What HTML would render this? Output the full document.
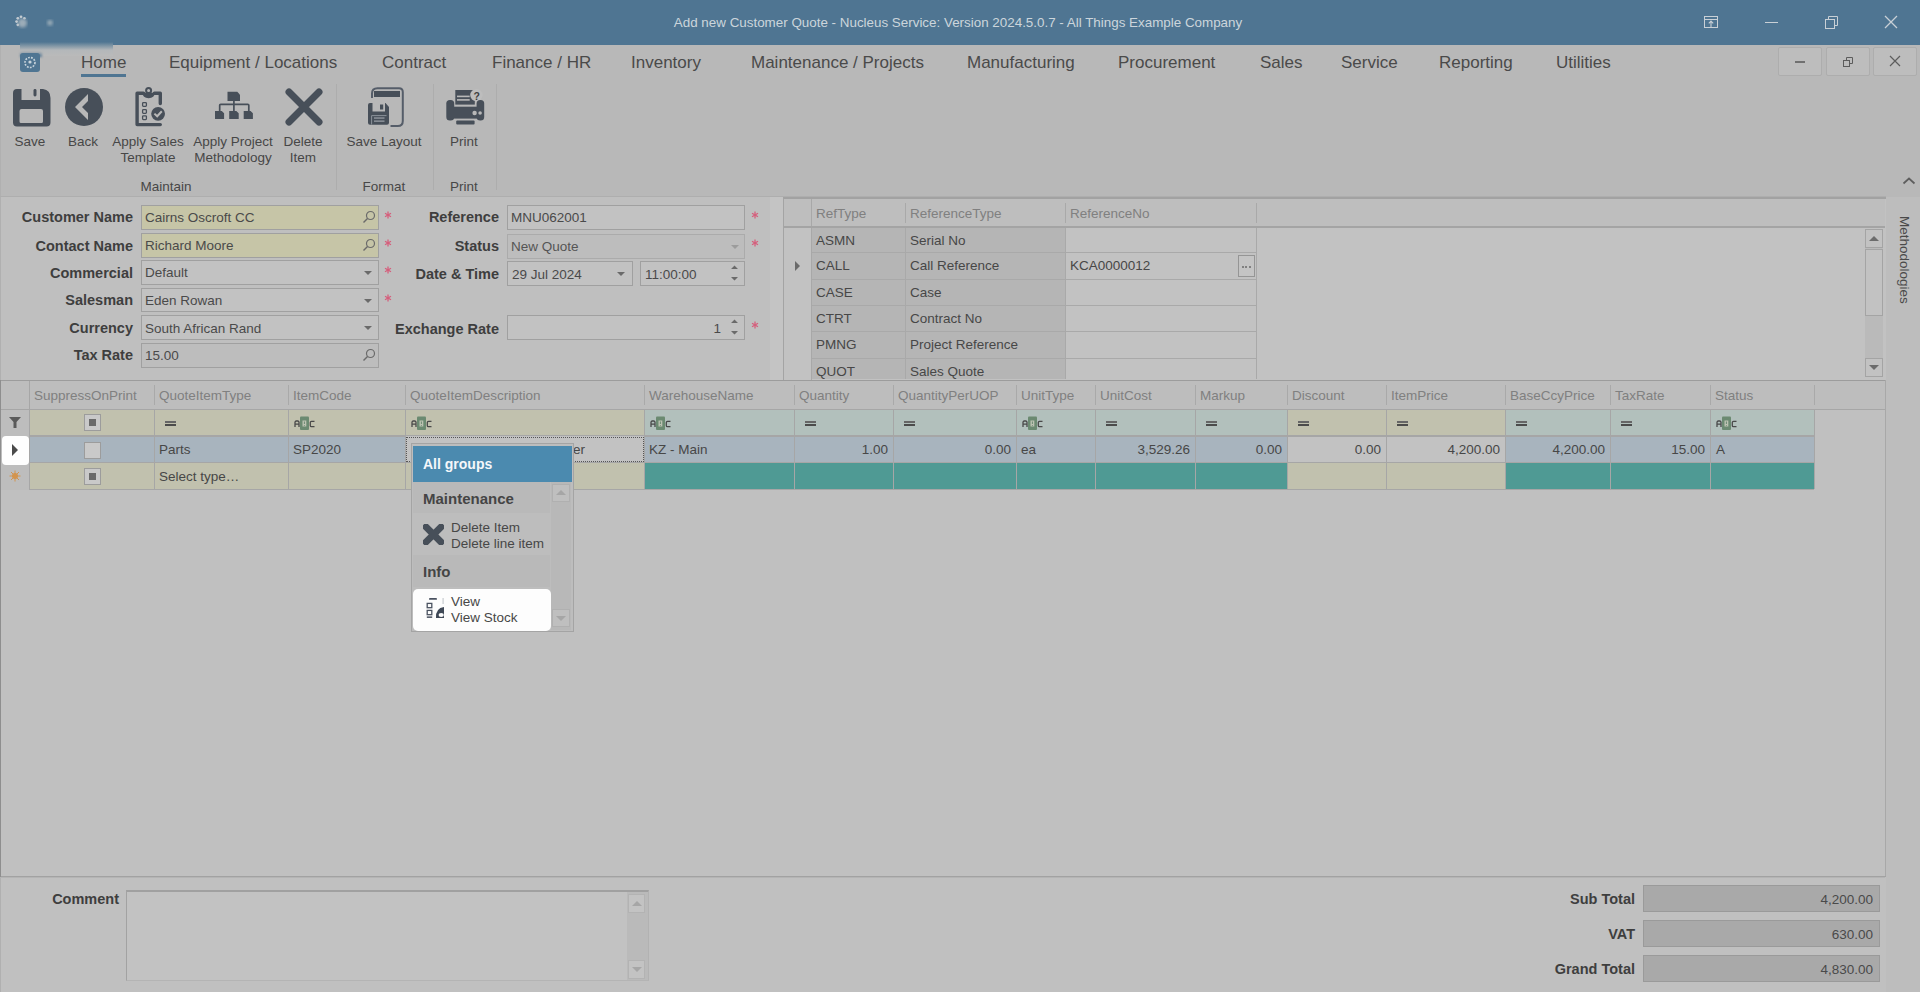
<!DOCTYPE html><html><head><meta charset="utf-8"><style>
html,body{margin:0;padding:0;width:1920px;height:992px;overflow:hidden;background:#b8b8b8;}
.t{position:absolute;white-space:nowrap;font-family:"Liberation Sans", sans-serif;}
.r{position:absolute;box-sizing:border-box;}
</style></head><body>
<div class="r" style="left:0px;top:0px;width:1920px;height:45px;background:#4f7592;"></div>
<div class="t" style="left:558px;width:800px;text-align:center;top:16px;font-size:13.4px;line-height:13.4px;font-weight:400;color:#ccd5dc;margin-top:0px;">Add new Customer Quote - Nucleus Service: Version 2024.5.0.7 - All Things Example Company</div>
<svg class="r" style="left:13px;top:12px;" width="50" height="24" viewBox="0 0 50 24"><defs><filter id="b1"><feGaussianBlur stdDeviation="1.6"/></filter><filter id="b2"><feGaussianBlur stdDeviation="0.5"/></filter></defs><g fill="#c3cbd1" filter="url(#b2)"><circle cx="8" cy="4.8" r="1.4"/><circle cx="4.8" cy="6.3" r="1.4"/><circle cx="11.4" cy="6.3" r="1.3"/><circle cx="3.6" cy="9.6" r="1.4"/><circle cx="4.8" cy="12.8" r="1.4"/></g><circle cx="9.5" cy="11" r="4.5" fill="#a9b6bf" filter="url(#b1)" opacity="0.85"/><circle cx="37" cy="10.7" r="2.8" fill="#9fb0bb" filter="url(#b1)" opacity="0.9"/></svg>
<svg class="r" style="left:1701px;top:12px;" width="20" height="20" viewBox="0 0 20 20"><rect x="3.5" y="4.5" width="13" height="11" fill="none" stroke="#c9d0d6" stroke-width="1"/><line x1="3.5" y1="7.5" x2="16.5" y2="7.5" stroke="#c9d0d6"/><path d="M10 15.5 V9 M7.8 11.3 L10 9 L12.2 11.3" fill="none" stroke="#c9d0d6" stroke-width="1.1"/></svg>
<div class="r" style="left:1765px;top:22px;width:13px;height:1.3px;background:#c9d0d6;"></div>
<svg class="r" style="left:1821px;top:12px;" width="20" height="20" viewBox="0 0 20 20"><rect x="4.5" y="7.5" width="9" height="9" fill="none" stroke="#c9d0d6"/><path d="M7.5 7.5 V4.5 H16.5 V13.5 H13.5" fill="none" stroke="#c9d0d6"/></svg>
<svg class="r" style="left:1881px;top:12px;" width="20" height="20" viewBox="0 0 20 20"><path d="M4 4 L16 16 M16 4 L4 16" stroke="#c9d0d6" stroke-width="1.3"/></svg>
<div class="r" style="left:0px;top:45px;width:1px;height:947px;background:#b0b0b0;"></div>
<div class="r" style="left:20px;top:42px;width:93px;height:14px;background:linear-gradient(#4f7592 0px, #8297a6 4px, #b3b7ba 8px, #bababa 14px);"></div>
<div class="r" style="left:20px;top:51px;width:22px;height:6px;background:linear-gradient(#bababa, #4f7592);border-radius:4px 4px 0 0;filter:blur(1px);"></div>
<div class="r" style="left:20px;top:53px;width:20px;height:19px;background:#4f7592;border-radius:3px;"></div>
<svg class="r" style="left:20px;top:53px;" width="20" height="19" viewBox="0 0 20 19"><circle cx="10" cy="9.5" r="5" fill="none" stroke="#c8d4dc" stroke-width="1.6" stroke-dasharray="1.8 1.2"/><circle cx="10" cy="9" r="1.6" fill="#c8d4dc"/></svg>
<div class="t" style="left:81px;top:54px;font-size:17px;line-height:17px;font-weight:400;color:#4a4a4a;">Home</div>
<div class="t" style="left:169px;top:54px;font-size:17px;line-height:17px;font-weight:400;color:#4a4a4a;">Equipment / Locations</div>
<div class="t" style="left:382px;top:54px;font-size:17px;line-height:17px;font-weight:400;color:#4a4a4a;">Contract</div>
<div class="t" style="left:492px;top:54px;font-size:17px;line-height:17px;font-weight:400;color:#4a4a4a;">Finance / HR</div>
<div class="t" style="left:631px;top:54px;font-size:17px;line-height:17px;font-weight:400;color:#4a4a4a;">Inventory</div>
<div class="t" style="left:751px;top:54px;font-size:17px;line-height:17px;font-weight:400;color:#4a4a4a;">Maintenance / Projects</div>
<div class="t" style="left:967px;top:54px;font-size:17px;line-height:17px;font-weight:400;color:#4a4a4a;">Manufacturing</div>
<div class="t" style="left:1118px;top:54px;font-size:17px;line-height:17px;font-weight:400;color:#4a4a4a;">Procurement</div>
<div class="t" style="left:1260px;top:54px;font-size:17px;line-height:17px;font-weight:400;color:#4a4a4a;">Sales</div>
<div class="t" style="left:1341px;top:54px;font-size:17px;line-height:17px;font-weight:400;color:#4a4a4a;">Service</div>
<div class="t" style="left:1439px;top:54px;font-size:17px;line-height:17px;font-weight:400;color:#4a4a4a;">Reporting</div>
<div class="t" style="left:1556px;top:54px;font-size:17px;line-height:17px;font-weight:400;color:#4a4a4a;">Utilities</div>
<div class="r" style="left:81px;top:74px;width:45px;height:3px;background:#4f7592;"></div>
<div class="r" style="left:1778px;top:47px;width:44px;height:29px;background:#bdbdbd;border:1px solid #adadad;border-radius:2px;"></div>
<div class="r" style="left:1826px;top:47px;width:44px;height:29px;background:#bdbdbd;border:1px solid #adadad;border-radius:2px;"></div>
<div class="r" style="left:1873px;top:47px;width:44px;height:29px;background:#bdbdbd;border:1px solid #adadad;border-radius:2px;"></div>
<div class="r" style="left:1795px;top:61px;width:10px;height:2px;background:#707070;"></div>
<svg class="r" style="left:1841px;top:55px;" width="14" height="14" viewBox="0 0 14 14"><rect x="2.5" y="5.5" width="6" height="6" fill="none" stroke="#5c5c5c"/><path d="M5.5 5.5 V2.5 H11.5 V8.5 H8.5" fill="none" stroke="#5c5c5c"/></svg>
<svg class="r" style="left:1888px;top:54px;" width="14" height="14" viewBox="0 0 14 14"><path d="M2 2 L12 12 M12 2 L2 12" stroke="#5c5c5c" stroke-width="1.2"/></svg>
<div class="r" style="left:0px;top:196px;width:1886px;height:1px;background:#aeaeae;"></div>
<div class="r" style="left:336px;top:84px;width:1px;height:106px;background:#adadad;"></div>
<div class="r" style="left:433px;top:84px;width:1px;height:106px;background:#adadad;"></div>
<div class="r" style="left:496px;top:84px;width:1px;height:106px;background:#adadad;"></div>
<svg class="r" style="left:13px;top:88px;" width="38" height="39" viewBox="0 0 38 39"><path d="M0 5 Q0 1 4 1 H8.5 V12 H27 V1 H30 Q37.5 2 37.5 10 V34.5 Q37.5 38.5 33.5 38.5 H4 Q0 38.5 0 34.5 Z M6.5 23 Q6.5 21 8.5 21 H28 Q30 21 30 23 V33.5 Q30 35 28.5 35 H8 Q6.5 35 6.5 33.5 Z" fill="#474f59" fill-rule="evenodd"/><rect x="20.5" y="1" width="3" height="7.5" rx="1.4" fill="#474f59"/></svg>
<svg class="r" style="left:65px;top:88px;" width="38" height="38" viewBox="0 0 38 38"><circle cx="19" cy="19" r="19" fill="#474f59"/><path d="M23 6 L10 19 L23 32 V25 L17 19 L23 13 Z" fill="#b8b8b8"/></svg>
<svg class="r" style="left:130px;top:84px;" width="36" height="46" viewBox="0 0 36 46"><path d="M13.5 9.3 H7.1 V40.6 H30.3 M24.4 9.3 H30.3 V19.6" fill="none" stroke="#474f59" stroke-width="3.4" stroke-linejoin="round" stroke-linecap="round"/><circle cx="18.6" cy="6.6" r="2.5" fill="none" stroke="#474f59" stroke-width="2"/><path d="M12.3 8.8 H24.9 Q24.5 14.2 18.6 14.2 Q12.7 14.2 12.3 8.8 Z" fill="#474f59"/><g fill="none" stroke="#474f59" stroke-width="1.3"><rect x="12.6" y="18.6" width="3.8" height="3.8" rx="0.8"/><rect x="12.6" y="25.6" width="3.8" height="3.8" rx="0.8"/><rect x="12.6" y="31.8" width="3.8" height="3.8" rx="0.8"/></g><circle cx="28.1" cy="29.8" r="6.9" fill="#474f59"/><path d="M24.4 29.6 L27.2 32.3 L31.8 27.3" fill="none" stroke="#b8b8b8" stroke-width="2"/></svg>
<svg class="r" style="left:210px;top:84px;" width="46" height="40" viewBox="0 0 46 40"><path d="M17.5 7.8 H27.3 L30 10.8 V16.9 H17.5 Z" fill="#474f59"/><path d="M23.9 16.9 V27 M9.7 27 V21.3 Q9.7 20.3 10.7 20.3 H37.8 Q38.8 20.3 38.8 21.3 V27" fill="none" stroke="#474f59" stroke-width="1.7"/><path d="M5 27 H11.8 L14.1 29.3 V34.9 H5 Z M19.2 27 H26.3 L28.7 29.3 V34.9 H19.2 Z M33.7 27 H40.6 L42.9 29.3 V34.9 H33.7 Z" fill="#474f59"/></svg>
<svg class="r" style="left:285px;top:88px;" width="38" height="38" viewBox="0 0 38 38"><path d="M4 4 L34 34 M34 4 L4 34" stroke="#474f59" stroke-width="7" stroke-linecap="round"/></svg>
<svg class="r" style="left:360px;top:84px;" width="50" height="46" viewBox="0 0 50 46"><path d="M12 14 V9.5 Q12 4.3 17.5 4.3 H39 Q42.8 4.3 42.8 8 V37 Q42.8 42 37.8 42 H30.5" fill="none" stroke="#555d69" stroke-width="2"/><rect x="14" y="7" width="26" height="6" fill="#474f59"/><path d="M8 21 Q8 19 10 19 H12.5 V27.5 H25 V19 H25.5 L29 23 V38.7 Q29 40.7 27 40.7 H10 Q8 40.7 8 38.7 Z" fill="#474f59"/><rect x="20" y="20.5" width="3.2" height="5" fill="#474f59"/><rect x="14" y="33.3" width="10.5" height="1.5" fill="#8c929a"/><rect x="14" y="36.4" width="10.5" height="1.5" fill="#8c929a"/><path d="M11.6 40.5 V31.6 H26.5" fill="none" stroke="#8c929a" stroke-width="1"/></svg>
<svg class="r" style="left:440px;top:84px;" width="50" height="46" viewBox="0 0 50 46"><rect x="15.3" y="6" width="19.5" height="14.6" fill="#474f59"/><rect x="17" y="11.6" width="12.7" height="1.6" fill="#b8b8b8"/><rect x="17" y="15.1" width="12.7" height="1.6" fill="#b8b8b8"/><circle cx="36.4" cy="11.1" r="6.2" fill="#bdbdbd"/><text x="33.6" y="15.8" font-family="Liberation Sans" font-size="10.5" font-weight="700" fill="#3f3f3f">?</text><rect x="6.3" y="16" width="7.9" height="20.6" rx="3.6" fill="#474f59"/><rect x="36.6" y="16" width="7.6" height="20.6" rx="3.6" fill="#474f59"/><rect x="10" y="22.7" width="30" height="11.9" fill="#474f59"/><circle cx="34.6" cy="29" r="2.2" fill="#b8b8b8"/><circle cx="40.1" cy="29" r="1.8" fill="#b8b8b8"/><rect x="16.2" y="36.6" width="18.4" height="4" rx="1" fill="#474f59"/></svg>
<div class="t" style="left:-370px;width:800px;text-align:center;top:135px;font-size:13.5px;line-height:13.5px;font-weight:400;color:#474747;">Save</div>
<div class="t" style="left:-317px;width:800px;text-align:center;top:135px;font-size:13.5px;line-height:13.5px;font-weight:400;color:#474747;">Back</div>
<div class="t" style="left:-252px;width:800px;text-align:center;top:135px;font-size:13.5px;line-height:13.5px;font-weight:400;color:#474747;">Apply Sales</div>
<div class="t" style="left:-252px;width:800px;text-align:center;top:151px;font-size:13.5px;line-height:13.5px;font-weight:400;color:#474747;">Template</div>
<div class="t" style="left:-167px;width:800px;text-align:center;top:135px;font-size:13.5px;line-height:13.5px;font-weight:400;color:#474747;">Apply Project</div>
<div class="t" style="left:-167px;width:800px;text-align:center;top:151px;font-size:13.5px;line-height:13.5px;font-weight:400;color:#474747;">Methodology</div>
<div class="t" style="left:-97px;width:800px;text-align:center;top:135px;font-size:13.5px;line-height:13.5px;font-weight:400;color:#474747;">Delete</div>
<div class="t" style="left:-97px;width:800px;text-align:center;top:151px;font-size:13.5px;line-height:13.5px;font-weight:400;color:#474747;">Item</div>
<div class="t" style="left:-16px;width:800px;text-align:center;top:135px;font-size:13.5px;line-height:13.5px;font-weight:400;color:#474747;">Save Layout</div>
<div class="t" style="left:64px;width:800px;text-align:center;top:135px;font-size:13.5px;line-height:13.5px;font-weight:400;color:#474747;">Print</div>
<div class="t" style="left:-234px;width:800px;text-align:center;top:180px;font-size:13.5px;line-height:13.5px;font-weight:400;color:#474747;">Maintain</div>
<div class="t" style="left:-16px;width:800px;text-align:center;top:180px;font-size:13.5px;line-height:13.5px;font-weight:400;color:#474747;">Format</div>
<div class="t" style="left:64px;width:800px;text-align:center;top:180px;font-size:13.5px;line-height:13.5px;font-weight:400;color:#474747;">Print</div>
<svg class="r" style="left:1902px;top:176px;" width="14" height="10" viewBox="0 0 14 10"><path d="M1.5 7.5 L7 2.5 L12.5 7.5" fill="none" stroke="#5e5e5e" stroke-width="1.7"/></svg>
<div class="r" style="left:1px;top:197px;width:1885px;height:183px;background:#bfbfbf;"></div>
<div class="r" style="left:1885px;top:197px;width:1px;height:183px;background:#a8a8a8;"></div>
<div class="r" style="left:1886px;top:197px;width:34px;height:795px;background:#bdbdbd;"></div>
<div class="t" style="left:1893px;top:216px;width:20px;height:90px;"><div style="position:absolute;left:0;top:0;transform-origin:0 0;transform:translate(19px,0) rotate(90deg);font-size:13.5px;line-height:15px;color:#4a4a4a;">Methodologies</div></div>
<div class="t" style="right:1787px;top:210px;font-size:14.5px;line-height:14.5px;font-weight:700;color:#3e3e3e;">Customer Name</div>
<div class="r" style="left:141px;top:205px;width:238px;height:25px;background:#c6c5a7;border:1px solid #a0a0a0;"></div>
<div class="t" style="left:145px;top:211px;font-size:13.5px;line-height:13.5px;font-weight:400;color:#4a4a4a;">Cairns Oscroft CC</div>
<svg class="r" style="left:362px;top:210px;" width="14" height="14" viewBox="0 0 14 14"><circle cx="8.5" cy="5.5" r="4" fill="none" stroke="#6a6a6a" stroke-width="1.2"/><line x1="5.5" y1="8.5" x2="1.5" y2="12.5" stroke="#6a6a6a" stroke-width="1.4"/></svg>
<svg class="r" style="left:384px;top:210.5px;" width="8" height="8" viewBox="0 0 8 8"><g stroke="#d65e7c" stroke-width="1.3"><line x1="4" y1="0.5" x2="4" y2="7.5"/><line x1="1" y1="2.3" x2="7" y2="5.7"/><line x1="1" y1="5.7" x2="7" y2="2.3"/></g></svg>
<div class="t" style="right:1787px;top:239px;font-size:14.5px;line-height:14.5px;font-weight:700;color:#3e3e3e;">Contact Name</div>
<div class="r" style="left:141px;top:233px;width:238px;height:25px;background:#c6c5a7;border:1px solid #a0a0a0;"></div>
<div class="t" style="left:145px;top:239px;font-size:13.5px;line-height:13.5px;font-weight:400;color:#4a4a4a;">Richard Moore</div>
<svg class="r" style="left:362px;top:238px;" width="14" height="14" viewBox="0 0 14 14"><circle cx="8.5" cy="5.5" r="4" fill="none" stroke="#6a6a6a" stroke-width="1.2"/><line x1="5.5" y1="8.5" x2="1.5" y2="12.5" stroke="#6a6a6a" stroke-width="1.4"/></svg>
<svg class="r" style="left:384px;top:238.5px;" width="8" height="8" viewBox="0 0 8 8"><g stroke="#d65e7c" stroke-width="1.3"><line x1="4" y1="0.5" x2="4" y2="7.5"/><line x1="1" y1="2.3" x2="7" y2="5.7"/><line x1="1" y1="5.7" x2="7" y2="2.3"/></g></svg>
<div class="t" style="right:1787px;top:266px;font-size:14.5px;line-height:14.5px;font-weight:700;color:#3e3e3e;">Commercial</div>
<div class="r" style="left:141px;top:260px;width:238px;height:25px;background:#c2c2c2;border:1px solid #a0a0a0;"></div>
<div class="t" style="left:145px;top:266px;font-size:13.5px;line-height:13.5px;font-weight:400;color:#4a4a4a;">Default</div>
<svg class="r" style="left:364px;top:271px;" width="9" height="5" viewBox="0 0 9 5"><path d="M0 0 H8 L4 4 Z" fill="#6a6a6a"/></svg>
<svg class="r" style="left:384px;top:265.5px;" width="8" height="8" viewBox="0 0 8 8"><g stroke="#d65e7c" stroke-width="1.3"><line x1="4" y1="0.5" x2="4" y2="7.5"/><line x1="1" y1="2.3" x2="7" y2="5.7"/><line x1="1" y1="5.7" x2="7" y2="2.3"/></g></svg>
<div class="t" style="right:1787px;top:293px;font-size:14.5px;line-height:14.5px;font-weight:700;color:#3e3e3e;">Salesman</div>
<div class="r" style="left:141px;top:288px;width:238px;height:24px;background:#c2c2c2;border:1px solid #a0a0a0;"></div>
<div class="t" style="left:145px;top:294px;font-size:13.5px;line-height:13.5px;font-weight:400;color:#4a4a4a;">Eden Rowan</div>
<svg class="r" style="left:364px;top:299px;" width="9" height="5" viewBox="0 0 9 5"><path d="M0 0 H8 L4 4 Z" fill="#6a6a6a"/></svg>
<svg class="r" style="left:384px;top:293.5px;" width="8" height="8" viewBox="0 0 8 8"><g stroke="#d65e7c" stroke-width="1.3"><line x1="4" y1="0.5" x2="4" y2="7.5"/><line x1="1" y1="2.3" x2="7" y2="5.7"/><line x1="1" y1="5.7" x2="7" y2="2.3"/></g></svg>
<div class="t" style="right:1787px;top:321px;font-size:14.5px;line-height:14.5px;font-weight:700;color:#3e3e3e;">Currency</div>
<div class="r" style="left:141px;top:315px;width:238px;height:25px;background:#c2c2c2;border:1px solid #a0a0a0;"></div>
<div class="t" style="left:145px;top:322px;font-size:13.5px;line-height:13.5px;font-weight:400;color:#4a4a4a;">South African Rand</div>
<svg class="r" style="left:364px;top:326px;" width="9" height="5" viewBox="0 0 9 5"><path d="M0 0 H8 L4 4 Z" fill="#6a6a6a"/></svg>
<div class="t" style="right:1787px;top:348px;font-size:14.5px;line-height:14.5px;font-weight:700;color:#3e3e3e;">Tax Rate</div>
<div class="r" style="left:141px;top:343px;width:238px;height:25px;background:#bdbdbd;border:1px solid #a0a0a0;"></div>
<div class="t" style="left:145px;top:349px;font-size:13.5px;line-height:13.5px;font-weight:400;color:#4a4a4a;">15.00</div>
<svg class="r" style="left:362px;top:348px;" width="14" height="14" viewBox="0 0 14 14"><circle cx="8.5" cy="5.5" r="4" fill="none" stroke="#6a6a6a" stroke-width="1.2"/><line x1="5.5" y1="8.5" x2="1.5" y2="12.5" stroke="#6a6a6a" stroke-width="1.4"/></svg>
<div class="t" style="right:1421px;top:210px;font-size:14.5px;line-height:14.5px;font-weight:700;color:#3e3e3e;">Reference</div>
<div class="r" style="left:507px;top:205px;width:238px;height:25px;background:#c2c2c2;border:1px solid #a0a0a0;"></div>
<div class="t" style="left:511px;top:211px;font-size:13.5px;line-height:13.5px;font-weight:400;color:#4a4a4a;">MNU062001</div>
<svg class="r" style="left:750.5px;top:210.5px;" width="8" height="8" viewBox="0 0 8 8"><g stroke="#d65e7c" stroke-width="1.3"><line x1="4" y1="0.5" x2="4" y2="7.5"/><line x1="1" y1="2.3" x2="7" y2="5.7"/><line x1="1" y1="5.7" x2="7" y2="2.3"/></g></svg>
<div class="t" style="right:1421px;top:239px;font-size:14.5px;line-height:14.5px;font-weight:700;color:#3e3e3e;">Status</div>
<div class="r" style="left:507px;top:234px;width:238px;height:25px;background:#bdbdbd;border:1px solid #ababab;"></div>
<div class="t" style="left:511px;top:240px;font-size:13.5px;line-height:13.5px;font-weight:400;color:#555;">New Quote</div>
<svg class="r" style="left:731px;top:245px;" width="9" height="5" viewBox="0 0 9 5"><path d="M0 0 H8 L4 4 Z" fill="#9c9c9c"/></svg>
<svg class="r" style="left:750.5px;top:238.5px;" width="8" height="8" viewBox="0 0 8 8"><g stroke="#d65e7c" stroke-width="1.3"><line x1="4" y1="0.5" x2="4" y2="7.5"/><line x1="1" y1="2.3" x2="7" y2="5.7"/><line x1="1" y1="5.7" x2="7" y2="2.3"/></g></svg>
<div class="t" style="right:1421px;top:267px;font-size:14.5px;line-height:14.5px;font-weight:700;color:#3e3e3e;">Date &amp; Time</div>
<div class="r" style="left:507px;top:261px;width:126px;height:25px;background:#c2c2c2;border:1px solid #a0a0a0;"></div>
<div class="t" style="left:512px;top:268px;font-size:13.5px;line-height:13.5px;font-weight:400;color:#4a4a4a;">29 Jul 2024</div>
<svg class="r" style="left:617px;top:272px;" width="9" height="5" viewBox="0 0 9 5"><path d="M0 0 H8 L4 4 Z" fill="#6a6a6a"/></svg>
<div class="r" style="left:640px;top:261px;width:105px;height:25px;background:#c2c2c2;border:1px solid #a0a0a0;"></div>
<div class="t" style="left:645px;top:268px;font-size:13.5px;line-height:13.5px;font-weight:400;color:#4a4a4a;">11:00:00</div>
<svg class="r" style="left:730px;top:264px;" width="9" height="18" viewBox="0 0 9 18"><path d="M1 5 L4.5 1.5 L8 5 Z M1 13 L4.5 16.5 L8 13 Z" fill="#6a6a6a"/></svg>
<div class="t" style="right:1421px;top:322px;font-size:14.5px;line-height:14.5px;font-weight:700;color:#3e3e3e;">Exchange Rate</div>
<div class="r" style="left:507px;top:315px;width:238px;height:25px;background:#c2c2c2;border:1px solid #a0a0a0;"></div>
<div class="t" style="right:1199px;top:322px;font-size:13.5px;line-height:13.5px;font-weight:400;color:#4a4a4a;">1</div>
<svg class="r" style="left:730px;top:318px;" width="9" height="18" viewBox="0 0 9 18"><path d="M1 5 L4.5 1.5 L8 5 Z M1 13 L4.5 16.5 L8 13 Z" fill="#6a6a6a"/></svg>
<svg class="r" style="left:750.5px;top:320.5px;" width="8" height="8" viewBox="0 0 8 8"><g stroke="#d65e7c" stroke-width="1.3"><line x1="4" y1="0.5" x2="4" y2="7.5"/><line x1="1" y1="2.3" x2="7" y2="5.7"/><line x1="1" y1="5.7" x2="7" y2="2.3"/></g></svg>
<div class="r" style="left:770px;top:197px;width:13px;height:183px;background:#c4c4c4;"></div>
<div class="r" style="left:783px;top:197px;width:1103px;height:183px;background:#c2c2c2;border-left:1px solid #a4a4a4;border-top:2px solid #a2a2a2;"></div>
<div class="r" style="left:784px;top:199px;width:1101px;height:27px;background:#bebebe;"></div>
<div class="r" style="left:811px;top:199px;width:1px;height:181px;background:#a8a8a8;"></div>
<div class="r" style="left:905px;top:203px;width:1px;height:20px;background:#a9a9a9;"></div>
<div class="r" style="left:1065px;top:203px;width:1px;height:20px;background:#a9a9a9;"></div>
<div class="r" style="left:1256px;top:203px;width:1px;height:20px;background:#a9a9a9;"></div>
<div class="t" style="left:816px;top:207px;font-size:13.5px;line-height:13.5px;font-weight:400;color:#808080;">RefType</div>
<div class="t" style="left:910px;top:207px;font-size:13.5px;line-height:13.5px;font-weight:400;color:#808080;">ReferenceType</div>
<div class="t" style="left:1070px;top:207px;font-size:13.5px;line-height:13.5px;font-weight:400;color:#808080;">ReferenceNo</div>
<div class="r" style="left:784px;top:226px;width:1101px;height:2px;background:#a4a4a4;"></div>
<div class="r" style="left:812px;top:228px;width:253px;height:25px;background:#b5b5b5;"></div>
<div class="r" style="left:1066px;top:228px;width:190px;height:25px;background:#c2c2c2;"></div>
<div class="r" style="left:812px;top:252px;width:444px;height:1px;background:#a9a9a9;"></div>
<div class="t" style="left:816px;top:234px;font-size:13.5px;line-height:13.5px;font-weight:400;color:#474747;">ASMN</div>
<div class="t" style="left:910px;top:234px;font-size:13.5px;line-height:13.5px;font-weight:400;color:#474747;">Serial No</div>
<div class="r" style="left:812px;top:253px;width:253px;height:27px;background:#b5b5b5;"></div>
<div class="r" style="left:1066px;top:253px;width:190px;height:27px;background:#c2c2c2;"></div>
<div class="r" style="left:812px;top:279px;width:444px;height:1px;background:#a9a9a9;"></div>
<div class="t" style="left:816px;top:259px;font-size:13.5px;line-height:13.5px;font-weight:400;color:#474747;">CALL</div>
<div class="t" style="left:910px;top:259px;font-size:13.5px;line-height:13.5px;font-weight:400;color:#474747;">Call Reference</div>
<div class="t" style="left:1070px;top:259px;font-size:13.5px;line-height:13.5px;font-weight:400;color:#474747;">KCA0000012</div>
<div class="r" style="left:812px;top:280px;width:253px;height:26px;background:#b5b5b5;"></div>
<div class="r" style="left:1066px;top:280px;width:190px;height:26px;background:#c2c2c2;"></div>
<div class="r" style="left:812px;top:305px;width:444px;height:1px;background:#a9a9a9;"></div>
<div class="t" style="left:816px;top:286px;font-size:13.5px;line-height:13.5px;font-weight:400;color:#474747;">CASE</div>
<div class="t" style="left:910px;top:286px;font-size:13.5px;line-height:13.5px;font-weight:400;color:#474747;">Case</div>
<div class="r" style="left:812px;top:306px;width:253px;height:26px;background:#b5b5b5;"></div>
<div class="r" style="left:1066px;top:306px;width:190px;height:26px;background:#c2c2c2;"></div>
<div class="r" style="left:812px;top:331px;width:444px;height:1px;background:#a9a9a9;"></div>
<div class="t" style="left:816px;top:312px;font-size:13.5px;line-height:13.5px;font-weight:400;color:#474747;">CTRT</div>
<div class="t" style="left:910px;top:312px;font-size:13.5px;line-height:13.5px;font-weight:400;color:#474747;">Contract No</div>
<div class="r" style="left:812px;top:332px;width:253px;height:27px;background:#b5b5b5;"></div>
<div class="r" style="left:1066px;top:332px;width:190px;height:27px;background:#c2c2c2;"></div>
<div class="r" style="left:812px;top:358px;width:444px;height:1px;background:#a9a9a9;"></div>
<div class="t" style="left:816px;top:338px;font-size:13.5px;line-height:13.5px;font-weight:400;color:#474747;">PMNG</div>
<div class="t" style="left:910px;top:338px;font-size:13.5px;line-height:13.5px;font-weight:400;color:#474747;">Project Reference</div>
<div class="r" style="left:812px;top:359px;width:253px;height:20px;background:#b5b5b5;"></div>
<div class="r" style="left:1066px;top:359px;width:190px;height:20px;background:#c2c2c2;"></div>
<div class="t" style="left:816px;top:365px;font-size:13.5px;line-height:13.5px;font-weight:400;color:#474747;">QUOT</div>
<div class="t" style="left:910px;top:365px;font-size:13.5px;line-height:13.5px;font-weight:400;color:#474747;">Sales Quote</div>
<div class="r" style="left:905px;top:228px;width:1px;height:151px;background:#a9a9a9;"></div>
<div class="r" style="left:1065px;top:228px;width:1px;height:151px;background:#a9a9a9;"></div>
<div class="r" style="left:1256px;top:228px;width:1px;height:151px;background:#a9a9a9;"></div>
<div class="r" style="left:1238px;top:255px;width:17px;height:22px;background:#c4c4c4;border:1px solid #959595;"></div>
<div class="r" style="left:1241.5px;top:265.5px;width:2.2px;height:2.2px;background:#6a6a6a;border-radius:1px;"></div>
<div class="r" style="left:1245.3px;top:265.5px;width:2.2px;height:2.2px;background:#6a6a6a;border-radius:1px;"></div>
<div class="r" style="left:1249px;top:265.5px;width:2.2px;height:2.2px;background:#6a6a6a;border-radius:1px;"></div>
<svg class="r" style="left:795px;top:261px;" width="6" height="10" viewBox="0 0 6 10"><path d="M0 0 L5 5 L0 10 Z" fill="#6a6a6a"/></svg>
<div class="r" style="left:1865px;top:229px;width:18px;height:148px;background:#bababa;"></div>
<div class="r" style="left:1865px;top:229px;width:18px;height:19px;background:#c2c2c2;border:1px solid #a4a4a4;"></div>
<div class="r" style="left:1865px;top:249px;width:18px;height:67px;background:#c2c2c2;border:1px solid #a4a4a4;"></div>
<div class="r" style="left:1865px;top:358px;width:18px;height:19px;background:#c2c2c2;border:1px solid #a4a4a4;"></div>
<svg class="r" style="left:1869px;top:234px;" width="10" height="8" viewBox="0 0 10 8"><path d="M0 7 L5 2 L10 7 Z" fill="#6c6c6c"/></svg>
<svg class="r" style="left:1869px;top:364px;" width="10" height="8" viewBox="0 0 10 8"><path d="M0 1 L5 6 L10 1 Z" fill="#6c6c6c"/></svg>
<div class="r" style="left:1px;top:380px;width:1885px;height:497px;background:#c0c0c0;"></div>
<div class="r" style="left:0px;top:380px;width:1886px;height:1px;background:#9c9c9c;"></div>
<div class="r" style="left:1885px;top:380px;width:1px;height:497px;background:#a8a8a8;"></div>
<div class="r" style="left:0px;top:876px;width:1886px;height:1px;background:#a2a2a2;"></div>
<div class="r" style="left:0px;top:877px;width:1886px;height:1px;background:#b4b4b4;"></div>
<div class="r" style="left:0px;top:380px;width:1px;height:497px;background:#8e8e8e;"></div>
<div class="r" style="left:1px;top:381px;width:1884px;height:28px;background:#bdbdbd;"></div>
<div class="r" style="left:1px;top:409px;width:1884px;height:1px;background:#a6a6a6;"></div>
<div class="r" style="left:29px;top:381px;width:1px;height:28px;background:#a6a6a6;"></div>
<div class="t" style="left:34px;top:389px;font-size:13.5px;line-height:13.5px;font-weight:400;color:#808080;">SuppressOnPrint</div>
<div class="r" style="left:154px;top:385px;width:1px;height:20px;background:#a9a9a9;"></div>
<div class="t" style="left:159px;top:389px;font-size:13.5px;line-height:13.5px;font-weight:400;color:#808080;">QuoteItemType</div>
<div class="r" style="left:288px;top:385px;width:1px;height:20px;background:#a9a9a9;"></div>
<div class="t" style="left:293px;top:389px;font-size:13.5px;line-height:13.5px;font-weight:400;color:#808080;">ItemCode</div>
<div class="r" style="left:405px;top:385px;width:1px;height:20px;background:#a9a9a9;"></div>
<div class="t" style="left:410px;top:389px;font-size:13.5px;line-height:13.5px;font-weight:400;color:#808080;">QuoteItemDescription</div>
<div class="r" style="left:644px;top:385px;width:1px;height:20px;background:#a9a9a9;"></div>
<div class="t" style="left:649px;top:389px;font-size:13.5px;line-height:13.5px;font-weight:400;color:#808080;">WarehouseName</div>
<div class="r" style="left:794px;top:385px;width:1px;height:20px;background:#a9a9a9;"></div>
<div class="t" style="left:799px;top:389px;font-size:13.5px;line-height:13.5px;font-weight:400;color:#808080;">Quantity</div>
<div class="r" style="left:893px;top:385px;width:1px;height:20px;background:#a9a9a9;"></div>
<div class="t" style="left:898px;top:389px;font-size:13.5px;line-height:13.5px;font-weight:400;color:#808080;">QuantityPerUOP</div>
<div class="r" style="left:1016px;top:385px;width:1px;height:20px;background:#a9a9a9;"></div>
<div class="t" style="left:1021px;top:389px;font-size:13.5px;line-height:13.5px;font-weight:400;color:#808080;">UnitType</div>
<div class="r" style="left:1095px;top:385px;width:1px;height:20px;background:#a9a9a9;"></div>
<div class="t" style="left:1100px;top:389px;font-size:13.5px;line-height:13.5px;font-weight:400;color:#808080;">UnitCost</div>
<div class="r" style="left:1195px;top:385px;width:1px;height:20px;background:#a9a9a9;"></div>
<div class="t" style="left:1200px;top:389px;font-size:13.5px;line-height:13.5px;font-weight:400;color:#808080;">Markup</div>
<div class="r" style="left:1287px;top:385px;width:1px;height:20px;background:#a9a9a9;"></div>
<div class="t" style="left:1292px;top:389px;font-size:13.5px;line-height:13.5px;font-weight:400;color:#808080;">Discount</div>
<div class="r" style="left:1386px;top:385px;width:1px;height:20px;background:#a9a9a9;"></div>
<div class="t" style="left:1391px;top:389px;font-size:13.5px;line-height:13.5px;font-weight:400;color:#808080;">ItemPrice</div>
<div class="r" style="left:1505px;top:385px;width:1px;height:20px;background:#a9a9a9;"></div>
<div class="t" style="left:1510px;top:389px;font-size:13.5px;line-height:13.5px;font-weight:400;color:#808080;">BaseCcyPrice</div>
<div class="r" style="left:1610px;top:385px;width:1px;height:20px;background:#a9a9a9;"></div>
<div class="t" style="left:1615px;top:389px;font-size:13.5px;line-height:13.5px;font-weight:400;color:#808080;">TaxRate</div>
<div class="r" style="left:1710px;top:385px;width:1px;height:20px;background:#a9a9a9;"></div>
<div class="t" style="left:1715px;top:389px;font-size:13.5px;line-height:13.5px;font-weight:400;color:#808080;">Status</div>
<div class="r" style="left:1814px;top:385px;width:1px;height:20px;background:#a9a9a9;"></div>
<div class="r" style="left:1px;top:410px;width:28px;height:80px;background:#bdbdbd;"></div>
<div class="r" style="left:29px;top:410px;width:1px;height:80px;background:#a6a6a6;"></div>
<div class="r" style="left:30px;top:410px;width:124px;height:25px;background:#c1c1ae;"></div>
<div class="r" style="left:30px;top:436px;width:124px;height:26px;background:#a8b4be;"></div>
<div class="r" style="left:30px;top:463px;width:124px;height:26px;background:#c1c1ae;"></div>
<div class="r" style="left:155px;top:410px;width:133px;height:25px;background:#c1c1ae;"></div>
<div class="r" style="left:155px;top:436px;width:133px;height:26px;background:#a8b4be;"></div>
<div class="r" style="left:155px;top:463px;width:133px;height:26px;background:#c1c1ae;"></div>
<div class="r" style="left:289px;top:410px;width:116px;height:25px;background:#c1c1ae;"></div>
<div class="r" style="left:289px;top:436px;width:116px;height:26px;background:#a8b4be;"></div>
<div class="r" style="left:289px;top:463px;width:116px;height:26px;background:#c1c1ae;"></div>
<div class="r" style="left:406px;top:410px;width:238px;height:25px;background:#c1c1ae;"></div>
<div class="r" style="left:406px;top:436px;width:238px;height:26px;background:#a8b4be;"></div>
<div class="r" style="left:406px;top:463px;width:238px;height:26px;background:#c1c1ae;"></div>
<div class="r" style="left:645px;top:410px;width:149px;height:25px;background:#b2c0bc;"></div>
<div class="r" style="left:645px;top:436px;width:149px;height:26px;background:#a8b4be;"></div>
<div class="r" style="left:645px;top:463px;width:149px;height:26px;background:#4f9a94;"></div>
<div class="r" style="left:795px;top:410px;width:98px;height:25px;background:#b2c0bc;"></div>
<div class="r" style="left:795px;top:436px;width:98px;height:26px;background:#a8b4be;"></div>
<div class="r" style="left:795px;top:463px;width:98px;height:26px;background:#4f9a94;"></div>
<div class="r" style="left:894px;top:410px;width:122px;height:25px;background:#b2c0bc;"></div>
<div class="r" style="left:894px;top:436px;width:122px;height:26px;background:#a8b4be;"></div>
<div class="r" style="left:894px;top:463px;width:122px;height:26px;background:#4f9a94;"></div>
<div class="r" style="left:1017px;top:410px;width:78px;height:25px;background:#b2c0bc;"></div>
<div class="r" style="left:1017px;top:436px;width:78px;height:26px;background:#a8b4be;"></div>
<div class="r" style="left:1017px;top:463px;width:78px;height:26px;background:#4f9a94;"></div>
<div class="r" style="left:1096px;top:410px;width:99px;height:25px;background:#b2c0bc;"></div>
<div class="r" style="left:1096px;top:436px;width:99px;height:26px;background:#a8b4be;"></div>
<div class="r" style="left:1096px;top:463px;width:99px;height:26px;background:#4f9a94;"></div>
<div class="r" style="left:1196px;top:410px;width:91px;height:25px;background:#b2c0bc;"></div>
<div class="r" style="left:1196px;top:436px;width:91px;height:26px;background:#a8b4be;"></div>
<div class="r" style="left:1196px;top:463px;width:91px;height:26px;background:#4f9a94;"></div>
<div class="r" style="left:1288px;top:410px;width:98px;height:25px;background:#c1c1ae;"></div>
<div class="r" style="left:1288px;top:436px;width:98px;height:26px;background:#c2c2c2;"></div>
<div class="r" style="left:1288px;top:463px;width:98px;height:26px;background:#c1c1ae;"></div>
<div class="r" style="left:1387px;top:410px;width:118px;height:25px;background:#c1c1ae;"></div>
<div class="r" style="left:1387px;top:436px;width:118px;height:26px;background:#c2c2c2;"></div>
<div class="r" style="left:1387px;top:463px;width:118px;height:26px;background:#c1c1ae;"></div>
<div class="r" style="left:1506px;top:410px;width:104px;height:25px;background:#b2c0bc;"></div>
<div class="r" style="left:1506px;top:436px;width:104px;height:26px;background:#a8b4be;"></div>
<div class="r" style="left:1506px;top:463px;width:104px;height:26px;background:#4f9a94;"></div>
<div class="r" style="left:1611px;top:410px;width:99px;height:25px;background:#b2c0bc;"></div>
<div class="r" style="left:1611px;top:436px;width:99px;height:26px;background:#a8b4be;"></div>
<div class="r" style="left:1611px;top:463px;width:99px;height:26px;background:#4f9a94;"></div>
<div class="r" style="left:1711px;top:410px;width:103px;height:25px;background:#b2c0bc;"></div>
<div class="r" style="left:1711px;top:436px;width:103px;height:26px;background:#a8b4be;"></div>
<div class="r" style="left:1711px;top:463px;width:103px;height:26px;background:#4f9a94;"></div>
<div class="r" style="left:154px;top:410px;width:1px;height:79px;background:#a6a6a6;"></div>
<div class="r" style="left:288px;top:410px;width:1px;height:79px;background:#a6a6a6;"></div>
<div class="r" style="left:405px;top:410px;width:1px;height:79px;background:#a6a6a6;"></div>
<div class="r" style="left:644px;top:410px;width:1px;height:79px;background:#a6a6a6;"></div>
<div class="r" style="left:794px;top:410px;width:1px;height:79px;background:#a6a6a6;"></div>
<div class="r" style="left:893px;top:410px;width:1px;height:79px;background:#a6a6a6;"></div>
<div class="r" style="left:1016px;top:410px;width:1px;height:79px;background:#a6a6a6;"></div>
<div class="r" style="left:1095px;top:410px;width:1px;height:79px;background:#a6a6a6;"></div>
<div class="r" style="left:1195px;top:410px;width:1px;height:79px;background:#a6a6a6;"></div>
<div class="r" style="left:1287px;top:410px;width:1px;height:79px;background:#a6a6a6;"></div>
<div class="r" style="left:1386px;top:410px;width:1px;height:79px;background:#a6a6a6;"></div>
<div class="r" style="left:1505px;top:410px;width:1px;height:79px;background:#a6a6a6;"></div>
<div class="r" style="left:1610px;top:410px;width:1px;height:79px;background:#a6a6a6;"></div>
<div class="r" style="left:1710px;top:410px;width:1px;height:79px;background:#a6a6a6;"></div>
<div class="r" style="left:1814px;top:410px;width:1px;height:79px;background:#a6a6a6;"></div>
<div class="r" style="left:29px;top:435px;width:1785px;height:2px;background:#a6a6a6;"></div>
<div class="r" style="left:29px;top:462px;width:1785px;height:1px;background:#a6a6a6;"></div>
<div class="r" style="left:29px;top:489px;width:1785px;height:1px;background:#a6a6a6;"></div>
<svg class="r" style="left:8px;top:416px;" width="14" height="13" viewBox="0 0 14 13"><path d="M1 1 H13 L8.5 6 V12 H5.5 V6 Z" fill="#5a5a5a"/></svg>
<div class="r" style="left:84px;top:414px;width:17px;height:17px;background:#c9c9c9;border:1px solid #9c9c9c;"></div>
<div class="r" style="left:89px;top:419px;width:7px;height:7px;background:#6a6a6a;"></div>
<div class="r" style="left:84px;top:442px;width:17px;height:17px;background:#c9c9c9;border:1px solid #9c9c9c;"></div>
<div class="r" style="left:84px;top:468px;width:17px;height:17px;background:#c9c9c9;border:1px solid #9c9c9c;"></div>
<div class="r" style="left:89px;top:473px;width:7px;height:7px;background:#6a6a6a;"></div>
<div class="r" style="left:165px;top:421px;width:11px;height:1.6px;background:#666666;"></div>
<div class="r" style="left:165px;top:424px;width:11px;height:1.6px;background:#4c4c4c;"></div>
<svg class="r" style="left:294px;top:416px;" width="22" height="15" viewBox="0 0 22 15"><path d="M1 11 V6 L2 5 H4 L5 6 V11 M1 8.2 H5" fill="none" stroke="#4a4a4a" stroke-width="1.3"/><rect x="6" y="0.5" width="9" height="13.5" rx="1" fill="#6b8a71"/><rect x="8.5" y="4.5" width="3.8" height="6" fill="#bcc2b2"/><path d="M10.4 5.5 V8 M10.4 9 V9.8" stroke="#6b8a71" stroke-width="1"/><path d="M20.5 5.3 H17.5 Q16.3 5.3 16.3 6.5 V9.5 Q16.3 10.7 17.5 10.7 H20.5" fill="none" stroke="#4a4a4a" stroke-width="1.3"/></svg>
<svg class="r" style="left:411px;top:416px;" width="22" height="15" viewBox="0 0 22 15"><path d="M1 11 V6 L2 5 H4 L5 6 V11 M1 8.2 H5" fill="none" stroke="#4a4a4a" stroke-width="1.3"/><rect x="6" y="0.5" width="9" height="13.5" rx="1" fill="#6b8a71"/><rect x="8.5" y="4.5" width="3.8" height="6" fill="#bcc2b2"/><path d="M10.4 5.5 V8 M10.4 9 V9.8" stroke="#6b8a71" stroke-width="1"/><path d="M20.5 5.3 H17.5 Q16.3 5.3 16.3 6.5 V9.5 Q16.3 10.7 17.5 10.7 H20.5" fill="none" stroke="#4a4a4a" stroke-width="1.3"/></svg>
<svg class="r" style="left:650px;top:416px;" width="22" height="15" viewBox="0 0 22 15"><path d="M1 11 V6 L2 5 H4 L5 6 V11 M1 8.2 H5" fill="none" stroke="#4a4a4a" stroke-width="1.3"/><rect x="6" y="0.5" width="9" height="13.5" rx="1" fill="#6b8a71"/><rect x="8.5" y="4.5" width="3.8" height="6" fill="#bcc2b2"/><path d="M10.4 5.5 V8 M10.4 9 V9.8" stroke="#6b8a71" stroke-width="1"/><path d="M20.5 5.3 H17.5 Q16.3 5.3 16.3 6.5 V9.5 Q16.3 10.7 17.5 10.7 H20.5" fill="none" stroke="#4a4a4a" stroke-width="1.3"/></svg>
<div class="r" style="left:805px;top:421px;width:11px;height:1.6px;background:#666666;"></div>
<div class="r" style="left:805px;top:424px;width:11px;height:1.6px;background:#4c4c4c;"></div>
<div class="r" style="left:904px;top:421px;width:11px;height:1.6px;background:#666666;"></div>
<div class="r" style="left:904px;top:424px;width:11px;height:1.6px;background:#4c4c4c;"></div>
<svg class="r" style="left:1022px;top:416px;" width="22" height="15" viewBox="0 0 22 15"><path d="M1 11 V6 L2 5 H4 L5 6 V11 M1 8.2 H5" fill="none" stroke="#4a4a4a" stroke-width="1.3"/><rect x="6" y="0.5" width="9" height="13.5" rx="1" fill="#6b8a71"/><rect x="8.5" y="4.5" width="3.8" height="6" fill="#bcc2b2"/><path d="M10.4 5.5 V8 M10.4 9 V9.8" stroke="#6b8a71" stroke-width="1"/><path d="M20.5 5.3 H17.5 Q16.3 5.3 16.3 6.5 V9.5 Q16.3 10.7 17.5 10.7 H20.5" fill="none" stroke="#4a4a4a" stroke-width="1.3"/></svg>
<div class="r" style="left:1106px;top:421px;width:11px;height:1.6px;background:#666666;"></div>
<div class="r" style="left:1106px;top:424px;width:11px;height:1.6px;background:#4c4c4c;"></div>
<div class="r" style="left:1206px;top:421px;width:11px;height:1.6px;background:#666666;"></div>
<div class="r" style="left:1206px;top:424px;width:11px;height:1.6px;background:#4c4c4c;"></div>
<div class="r" style="left:1298px;top:421px;width:11px;height:1.6px;background:#666666;"></div>
<div class="r" style="left:1298px;top:424px;width:11px;height:1.6px;background:#4c4c4c;"></div>
<div class="r" style="left:1397px;top:421px;width:11px;height:1.6px;background:#666666;"></div>
<div class="r" style="left:1397px;top:424px;width:11px;height:1.6px;background:#4c4c4c;"></div>
<div class="r" style="left:1516px;top:421px;width:11px;height:1.6px;background:#666666;"></div>
<div class="r" style="left:1516px;top:424px;width:11px;height:1.6px;background:#4c4c4c;"></div>
<div class="r" style="left:1621px;top:421px;width:11px;height:1.6px;background:#666666;"></div>
<div class="r" style="left:1621px;top:424px;width:11px;height:1.6px;background:#4c4c4c;"></div>
<svg class="r" style="left:1716px;top:416px;" width="22" height="15" viewBox="0 0 22 15"><path d="M1 11 V6 L2 5 H4 L5 6 V11 M1 8.2 H5" fill="none" stroke="#4a4a4a" stroke-width="1.3"/><rect x="6" y="0.5" width="9" height="13.5" rx="1" fill="#6b8a71"/><rect x="8.5" y="4.5" width="3.8" height="6" fill="#bcc2b2"/><path d="M10.4 5.5 V8 M10.4 9 V9.8" stroke="#6b8a71" stroke-width="1"/><path d="M20.5 5.3 H17.5 Q16.3 5.3 16.3 6.5 V9.5 Q16.3 10.7 17.5 10.7 H20.5" fill="none" stroke="#4a4a4a" stroke-width="1.3"/></svg>
<svg class="r" style="left:12px;top:444px;" width="7" height="12" viewBox="0 0 7 12"><path d="M0 0 L6 6 L0 12 Z" fill="#4a4a4a"/></svg>
<div class="t" style="left:159px;top:443px;font-size:13.5px;line-height:13.5px;font-weight:400;color:#474747;">Parts</div>
<div class="t" style="left:293px;top:443px;font-size:13.5px;line-height:13.5px;font-weight:400;color:#474747;">SP2020</div>
<div class="r" style="left:406px;top:436px;width:238px;height:26px;background:#c2c2c2;"></div>
<div class="r" style="left:406px;top:437px;width:238px;height:25px;background:transparent;border:1px dotted #555;"></div>
<div class="t" style="left:573px;top:443px;font-size:13.5px;line-height:13.5px;font-weight:400;color:#474747;">er</div>
<div class="t" style="left:649px;top:443px;font-size:13.5px;line-height:13.5px;font-weight:400;color:#474747;">KZ - Main</div>
<div class="t" style="right:1032px;top:443px;font-size:13.5px;line-height:13.5px;font-weight:400;color:#474747;">1.00</div>
<div class="t" style="right:909px;top:443px;font-size:13.5px;line-height:13.5px;font-weight:400;color:#474747;">0.00</div>
<div class="t" style="right:730px;top:443px;font-size:13.5px;line-height:13.5px;font-weight:400;color:#474747;">3,529.26</div>
<div class="t" style="right:638px;top:443px;font-size:13.5px;line-height:13.5px;font-weight:400;color:#474747;">0.00</div>
<div class="t" style="right:539px;top:443px;font-size:13.5px;line-height:13.5px;font-weight:400;color:#474747;">0.00</div>
<div class="t" style="right:420px;top:443px;font-size:13.5px;line-height:13.5px;font-weight:400;color:#474747;">4,200.00</div>
<div class="t" style="right:315px;top:443px;font-size:13.5px;line-height:13.5px;font-weight:400;color:#474747;">4,200.00</div>
<div class="t" style="right:215px;top:443px;font-size:13.5px;line-height:13.5px;font-weight:400;color:#474747;">15.00</div>
<div class="t" style="left:1021px;top:443px;font-size:13.5px;line-height:13.5px;font-weight:400;color:#474747;">ea</div>
<div class="t" style="left:1716px;top:443px;font-size:13.5px;line-height:13.5px;font-weight:400;color:#474747;">A</div>
<svg class="r" style="left:9px;top:470px;" width="12" height="12" viewBox="0 0 12 12"><g stroke="#d3944e" stroke-width="1"><line x1="6" y1="0.5" x2="6" y2="11.5"/><line x1="0.5" y1="6" x2="11.5" y2="6"/><line x1="2" y1="2" x2="10" y2="10"/><line x1="10" y1="2" x2="2" y2="10"/></g><circle cx="6" cy="6" r="3" fill="#d3944e"/></svg>
<div class="t" style="left:159px;top:470px;font-size:13.5px;line-height:13.5px;font-weight:400;color:#474747;">Select type&hellip;</div>
<div class="r" style="left:2px;top:436px;width:27px;height:29px;background:#fefefe;border-radius:4px;"></div>
<svg class="r" style="left:12px;top:444px;" width="7" height="12" viewBox="0 0 7 12"><path d="M0 0 L6 6 L0 12 Z" fill="#4a4a4a"/></svg>
<div class="r" style="left:411px;top:443px;width:163px;height:189px;background:#bdbdbd;border:1px solid #a4a4a4;"></div>
<div class="r" style="left:413px;top:446px;width:159px;height:36px;background:#4b8aaf;"></div>
<div class="t" style="left:423px;top:457px;font-size:14px;line-height:14px;font-weight:700;color:#f4f7fa;">All groups</div>
<div class="r" style="left:413px;top:482px;width:137px;height:31px;background:#b9b9b9;"></div>
<div class="t" style="left:423px;top:491px;font-size:15px;line-height:15px;font-weight:700;color:#454545;">Maintenance</div>
<div class="r" style="left:413px;top:513px;width:137px;height:42px;background:#bdbdbd;"></div>
<svg class="r" style="left:423px;top:524px;" width="21" height="21" viewBox="0 0 21 21"><path d="M3 3 L18 18 M18 3 L3 18" stroke="#474f59" stroke-width="6.8" stroke-linecap="square"/></svg>
<div class="t" style="left:451px;top:521px;font-size:13.5px;line-height:13.5px;font-weight:400;color:#474747;">Delete Item</div>
<div class="t" style="left:451px;top:537px;font-size:13.5px;line-height:13.5px;font-weight:400;color:#474747;">Delete line item</div>
<div class="r" style="left:413px;top:555px;width:137px;height:32px;background:#b9b9b9;"></div>
<div class="t" style="left:423px;top:564px;font-size:15px;line-height:15px;font-weight:700;color:#454545;">Info</div>
<div class="r" style="left:413px;top:589px;width:138px;height:42px;background:#fdfdfd;border-radius:5px;"></div>
<svg class="r" style="left:418px;top:590px;" width="34" height="36" viewBox="0 0 34 36"><rect x="11" y="8" width="8" height="1.8" rx="0.9" fill="#4a5260"/><rect x="24.5" y="8" width="1.2" height="6" fill="#c8ccd0"/><rect x="9.2" y="13.4" width="4.6" height="4.3" fill="none" stroke="#4a5260" stroke-width="1.3"/><rect x="9.2" y="20.4" width="4.6" height="4.3" fill="none" stroke="#4a5260" stroke-width="1.3"/><rect x="8.8" y="26.4" width="5.4" height="1.5" fill="#4a5260"/><path d="M26 17 V28 H18 Q17.5 18 26 17 Z" fill="#3f4856"/><ellipse cx="23.2" cy="25" rx="2.6" ry="2.1" fill="#fdfdfd"/></svg>
<div class="t" style="left:451px;top:595px;font-size:13.5px;line-height:13.5px;font-weight:400;color:#474747;">View</div>
<div class="t" style="left:451px;top:611px;font-size:13.5px;line-height:13.5px;font-weight:400;color:#474747;">View Stock</div>
<div class="r" style="left:551px;top:482px;width:20px;height:148px;background:#b8b8b8;"></div>
<div class="r" style="left:552px;top:484px;width:18px;height:18px;background:#bfbfbf;border:1px solid #b0b0b0;"></div>
<div class="r" style="left:552px;top:609px;width:18px;height:18px;background:#bfbfbf;border:1px solid #b0b0b0;"></div>
<svg class="r" style="left:556px;top:489px;" width="10" height="7" viewBox="0 0 10 7"><path d="M0 6 L5 1 L10 6 Z" fill="#a6a6a6"/></svg>
<svg class="r" style="left:556px;top:615px;" width="10" height="7" viewBox="0 0 10 7"><path d="M0 1 L5 6 L10 1 Z" fill="#a6a6a6"/></svg>
<div class="r" style="left:1px;top:878px;width:1885px;height:114px;background:#c0c0c0;"></div>
<div class="r" style="left:0px;top:878px;width:1px;height:114px;background:#b0b0b0;"></div>
<div class="r" style="left:1885px;top:877px;width:1px;height:115px;background:#c0c0c0;"></div>
<div class="t" style="right:1801px;top:892px;font-size:14.5px;line-height:14.5px;font-weight:700;color:#3e3e3e;">Comment</div>
<div class="r" style="left:126px;top:890px;width:523px;height:91px;background:#c2c2c2;border-top:2px solid #a0a0a0;border-left:1px solid #a2a2a2;border-right:1px solid #b2b2b2;border-bottom:1px solid #b4b4b4;"></div>
<div class="r" style="left:627px;top:892px;width:21px;height:88px;background:#bababa;"></div>
<div class="r" style="left:628px;top:894px;width:17px;height:19px;background:#c3c3c3;border:1px solid #b3b3b3;"></div>
<div class="r" style="left:628px;top:960px;width:17px;height:19px;background:#c3c3c3;border:1px solid #b3b3b3;"></div>
<svg class="r" style="left:632px;top:900px;" width="10" height="7" viewBox="0 0 10 7"><path d="M0 6 L5 1 L10 6 Z" fill="#a6a6a6"/></svg>
<svg class="r" style="left:632px;top:966px;" width="10" height="7" viewBox="0 0 10 7"><path d="M0 1 L5 6 L10 1 Z" fill="#a6a6a6"/></svg>
<div class="t" style="right:285px;top:892px;font-size:14.5px;line-height:14.5px;font-weight:700;color:#3e3e3e;">Sub Total</div>
<div class="r" style="left:1643px;top:885px;width:237px;height:27px;background:#a9a9a9;border:1px solid #9a9a9a;"></div>
<div class="t" style="right:47px;top:893px;font-size:13.5px;line-height:13.5px;font-weight:400;color:#4a4a4a;">4,200.00</div>
<div class="t" style="right:285px;top:927px;font-size:14.5px;line-height:14.5px;font-weight:700;color:#3e3e3e;">VAT</div>
<div class="r" style="left:1643px;top:920px;width:237px;height:27px;background:#a9a9a9;border:1px solid #9a9a9a;"></div>
<div class="t" style="right:47px;top:928px;font-size:13.5px;line-height:13.5px;font-weight:400;color:#4a4a4a;">630.00</div>
<div class="t" style="right:285px;top:962px;font-size:14.5px;line-height:14.5px;font-weight:700;color:#3e3e3e;">Grand Total</div>
<div class="r" style="left:1643px;top:955px;width:237px;height:27px;background:#a9a9a9;border:1px solid #9a9a9a;"></div>
<div class="t" style="right:47px;top:963px;font-size:13.5px;line-height:13.5px;font-weight:400;color:#4a4a4a;">4,830.00</div>
</body></html>
